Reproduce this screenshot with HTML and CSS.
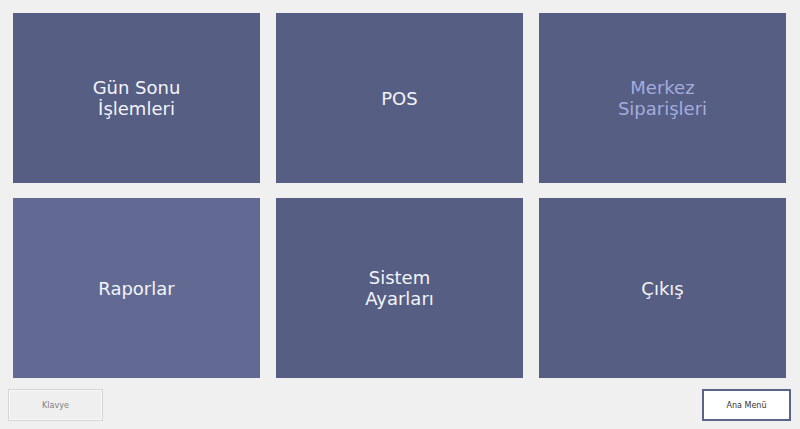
FILE: index.html
```html
<!DOCTYPE html>
<html lang="tr">
<head>
<meta charset="utf-8">
<title>Ana Menü</title>
<link rel="stylesheet" href="styles.css">
</head>
<body>
<div class="page">
  <div class="grid">
    <div class="tile"><span>Gün Sonu<br>İşlemleri</span></div>
    <div class="tile"><span>POS</span></div>
    <div class="tile tile-muted"><span>Merkez<br>Siparişleri</span></div>
    <div class="tile tile-active"><span>Raporlar</span></div>
    <div class="tile"><span>Sistem<br>Ayarları</span></div>
    <div class="tile"><span>Çıkış</span></div>
  </div>
  <div class="footer">
    <div class="btn btn-kb">Klavye</div>
    <div class="btn btn-main">Ana Menü</div>
  </div>
</div>
</body>
</html>
```

FILE: styles.css
```css
html, body {
  margin: 0;
  padding: 0;
  background: #f0f0f0;
  font-family: "DejaVu Sans", Verdana, sans-serif;
}
.page {
  width: 800px;
  height: 429px;
  box-sizing: border-box;
  padding: 13px 14px 0 13px;
  display: flex;
  flex-direction: column;
}
.grid {
  display: grid;
  grid-template-columns: 247px 247px 247px;
  grid-template-rows: 170px 180px;
  column-gap: 16px;
  row-gap: 15px;
}
.tile {
  background: #565e84;
  color: #f3f4f8;
  font-size: 18px;
  line-height: 21px;
  display: flex;
  align-items: center;
  justify-content: center;
  text-align: center;
}
.tile-active {
  background: #626a94;
}
.tile-muted {
  color: #a4acdc;
}
.footer {
  display: flex;
  justify-content: space-between;
  margin: 11px -5px 0 -5px;
}
.btn {
  height: 32px;
  box-sizing: border-box;
  display: flex;
  align-items: center;
  justify-content: center;
  font-size: 8px;
}
.btn-kb {
  width: 95px;
  border: 1px solid #d6d6d6;
  box-shadow: inset 0 0 0 1px #f8f8f8;
  background: #efefef;
  color: #808080;
}
.btn-main {
  width: 89px;
  border: 2px solid #5a6388;
  background: #ffffff;
  color: #333333;
}
```
